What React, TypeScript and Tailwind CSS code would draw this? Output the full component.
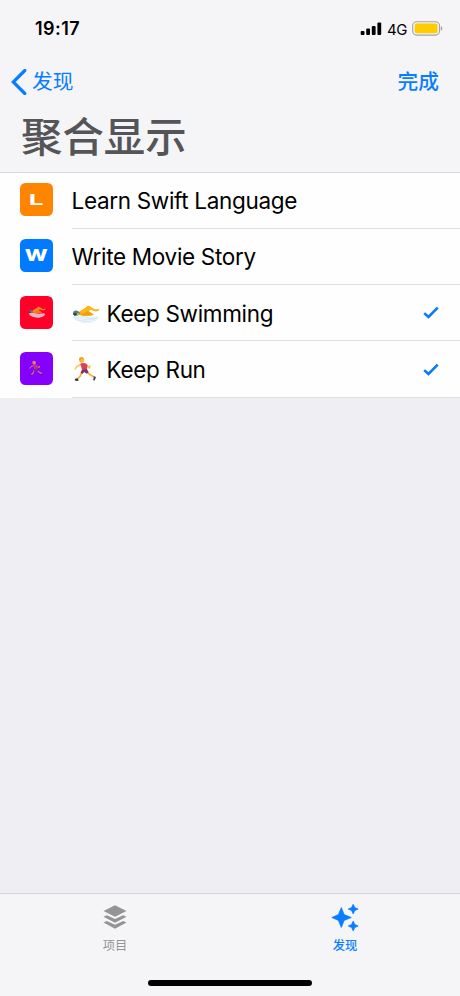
import type { ReactNode } from "react";

function Swimmer({ className }: { className?: string }) {
  return (
    <svg viewBox="186 44 84 64" className={className}>
      <path d="M189 84Q206 79 220 83T262 83L266 90Q258 101 236 104Q208 105 194 93Z" fill="#e8f4fb" />
      <path d="M206 71L228 57Q233 50 240 54L253 62Q259 64 265 61L268 64Q264 71 254 69L241 64L237 70Q249 74 252 80Q232 86 206 80Z" fill="#fbb51d" />
      <path d="M211 77Q224 76 233 68L238 71Q246 75 249 79Q230 84 211 80Z" fill="#eda00c" />
      <path d="M189 73Q191 65 201 67Q210 69 209 77Q205 83 196 82Q188 80 189 73Z" fill="#507b87" />
      <path d="M189 76L198 74L200 79L193 82Z" fill="#263e50" />
      <path d="M202 74Q208 73 208 78Q205 81 201 79Z" fill="#f8b421" />
      <path d="M190 87Q202 92 213 87T237 89T264 87M195 94Q210 99 225 94T257 96M215 101Q228 98 243 101" fill="none" stroke="#c6e2ef" strokeWidth="1.8" />
    </svg>
  );
}

function Runner({ className }: { className?: string }) {
  return (
    <svg viewBox="192 197 69 78" className={className}>
      <path d="M216 242L211 257L201 267" fill="none" stroke="#f6b12d" strokeWidth="5" strokeLinejoin="round" />
      <path d="M230 244L238 252L252 260" fill="none" stroke="#f6b12d" strokeWidth="5" strokeLinejoin="round" />
      <path d="M213 222L201 228L196 235M230 224L238 233L240 226" fill="none" stroke="#f9bd3c" strokeWidth="4.2" strokeLinecap="round" strokeLinejoin="round" />
      <path d="M211 220Q218 216 226 219L232 223L231 240L217 242Z" fill="#e23c5c" />
      <path d="M216 238L231 237L236 246L229 250L223 245L217 251L212 247Z" fill="#76376c" />
      <path d="M209 205Q213 200 221 203Q226 209 221 216Q215 220 210 215Z" fill="#fbbd35" />
      <path d="M207 207Q207 200 215 200Q220 201 222 205L213 206L211 215Q207 213 207 207Z" fill="#e9a51c" />
      <path d="M196 265L203 264L206 271L198 272L194 269ZM251 258L257 259L257 263L253 271L249 269L251 265Z" fill="#32334d" />
    </svg>
  );
}

function Check() {
  return (
    <svg viewBox="0 0 16 13" className="mr-[21px] h-[13px] w-4 shrink-0">
      <path d="M1.2 7.1L5.5 11L14.7 1.7" fill="none" stroke="#0b78f4" strokeWidth="2.6" />
    </svg>
  );
}

type RowProps = { color: string; badge: ReactNode; emoji?: ReactNode; label: string; checked?: boolean };

function Row({ color, badge, emoji, label, checked }: RowProps) {
  return (
    <div className="flex h-[56.3px] pl-5">
      <div className={`mt-[10.5px] flex h-[33px] w-[33px] shrink-0 items-center justify-center rounded-[5.5px] text-white ${color}`}>{badge}</div>
      <div className="ml-[18.5px] flex flex-1 items-center border-b border-[#e0e0e3]">
        {emoji}
        <span className="flex-1 whitespace-nowrap pt-[2.6px] text-[22.5px] leading-none tracking-[-0.32px] text-black">{label}</span>
        {checked && <Check />}
      </div>
    </div>
  );
}

export default function App() {
  return (
    <div className="flex h-[996px] w-[460px] flex-col overflow-hidden bg-[#eeeef3] font-['Inter','Noto_Sans_CJK_SC',sans-serif]">
      <header className="flex h-[172.5px] shrink-0 flex-col border-b border-[#d8d8dc] bg-[#f5f5f8]">
        <div className="flex h-[58px] items-center justify-between pl-[35px] pr-[18px]">
          <span className="text-[18px] font-semibold leading-none tracking-[0.45px]">19:17</span>
          <div className="flex items-center">
            <svg viewBox="0 0 22 14" className="h-[14px] w-[22px]">
              <rect x="0.7" y="9" width="3.8" height="4" rx="1" />
              <rect x="6.2" y="6.5" width="3.8" height="6.5" rx="1" />
              <rect x="11.8" y="4" width="3.8" height="9" rx="1" />
              <rect x="17.4" y="0.5" width="3.8" height="12.5" rx="1" />
            </svg>
            <span className="ml-[5px] text-[15px] leading-none tracking-[-0.4px]">4G</span>
            <svg viewBox="0 0 31 15" className="-mr-px -mt-px ml-[5px] h-[15px] w-[31px]">
              <rect x="0.7" y="0.7" width="26.8" height="13.4" rx="4" fill="none" stroke="#a3a3a5" strokeWidth="1.1" />
              <rect x="2.7" y="2.6" width="22.8" height="9.6" rx="2" fill="#fc0" />
              <path d="M28.8 5Q30.3 5.6 30.3 7.4T28.8 10Z" fill="#a3a3a5" />
            </svg>
          </div>
        </div>
        <div className="flex h-[47px] items-center justify-between pl-[11px] pr-[21px] text-[20.7px] leading-none text-[#087eff]">
          <div className="flex items-center">
            <svg viewBox="0 0 16 26" className="h-[26px] w-4"><path d="M13.8 1.5L2.3 13L13.8 24.5" fill="none" stroke="currentColor" strokeWidth="3.2" strokeLinecap="round" /></svg>
            <span className="ml-[5px] pt-[2px]">发现</span>
          </div>
          <span className="pt-[2px] font-medium">完成</span>
        </div>
        <h1 className="ml-[21px] mt-[11px] text-[41.4px] font-medium leading-[42px] text-[#555557]">聚合显示</h1>
      </header>
      <main className="shrink-0 bg-[#fefefe]">
        <Row color="bg-[#ff8500]" badge={<span className="scale-x-[1.75] text-[15px] font-bold leading-none">L</span>} label="Learn Swift Language" />
        <Row color="bg-[#007aff]" badge={<span className="scale-x-[1.4] text-[15.5px] font-extrabold leading-none">W</span>} label="Write Movie Story" />
        <Row color="bg-[#ff0028]" badge={<Swimmer className="h-[13.5px] w-[18px] opacity-75" />} emoji={<Swimmer className="mr-[7px] mt-px h-[21.3px] w-7 shrink-0" />} label="Keep Swimming" checked />
        <Row color="bg-[#8500ff]" badge={<Runner className="h-[17px] w-[15px] opacity-75" />} emoji={<Runner className="ml-[2.5px] mr-[9.5px] h-[26px] w-[23px] shrink-0" />} label="Keep Run" checked />
      </main>
      <div className="flex-1" />
      <footer className="flex h-[103px] shrink-0 flex-col border-t border-[#d2d2d7] bg-[#f5f5f8]">
        <nav className="grid h-[62px] grid-cols-2 text-[12.3px] font-medium leading-none">
          <div className="flex flex-col items-center pt-[11px] text-[#949494]">
            <svg viewBox="0 0 24 26" className="h-[26px] w-6" fill="currentColor">
              <path d="M12 .3L23.5 6L12 11.7L.5 6ZM.5 11.8L3.8 10.3L12 14L20.2 10.3L23.5 11.8L12 17.8ZM.5 17.6L3.8 16L12 19.8L20.2 16L23.5 17.6L12 23.8Z" />
            </svg>
            <span className="mt-[9px] font-normal">项目</span>
          </div>
          <div className="flex flex-col items-center pt-[10px] text-[#087eff]">
            <svg viewBox="0 0 28 28" className="h-7 w-7" fill="currentColor">
              <path d="M10.3 3.5L13.2 10.6L20.3 13.5L13.2 16.4L10.3 23.5L7.4 16.4L.8 13.5L7.4 10.6ZM22.2 .2L23.8 3.6L27.2 5.1L23.8 6.6L22.2 10L20.6 6.6L17.2 5.1L20.6 3.6ZM22.2 17L23.8 20.4L27.2 22L23.8 23.6L22.2 27L20.6 23.6L17.2 22L20.6 20.4Z" stroke="currentColor" strokeWidth="0.7" strokeLinejoin="round" />
            </svg>
            <span className="mt-2">发现</span>
          </div>
        </nav>
        <div className="mx-auto mt-6 h-[6px] w-[164px] rounded-full bg-black" />
      </footer>
    </div>
  );
}
